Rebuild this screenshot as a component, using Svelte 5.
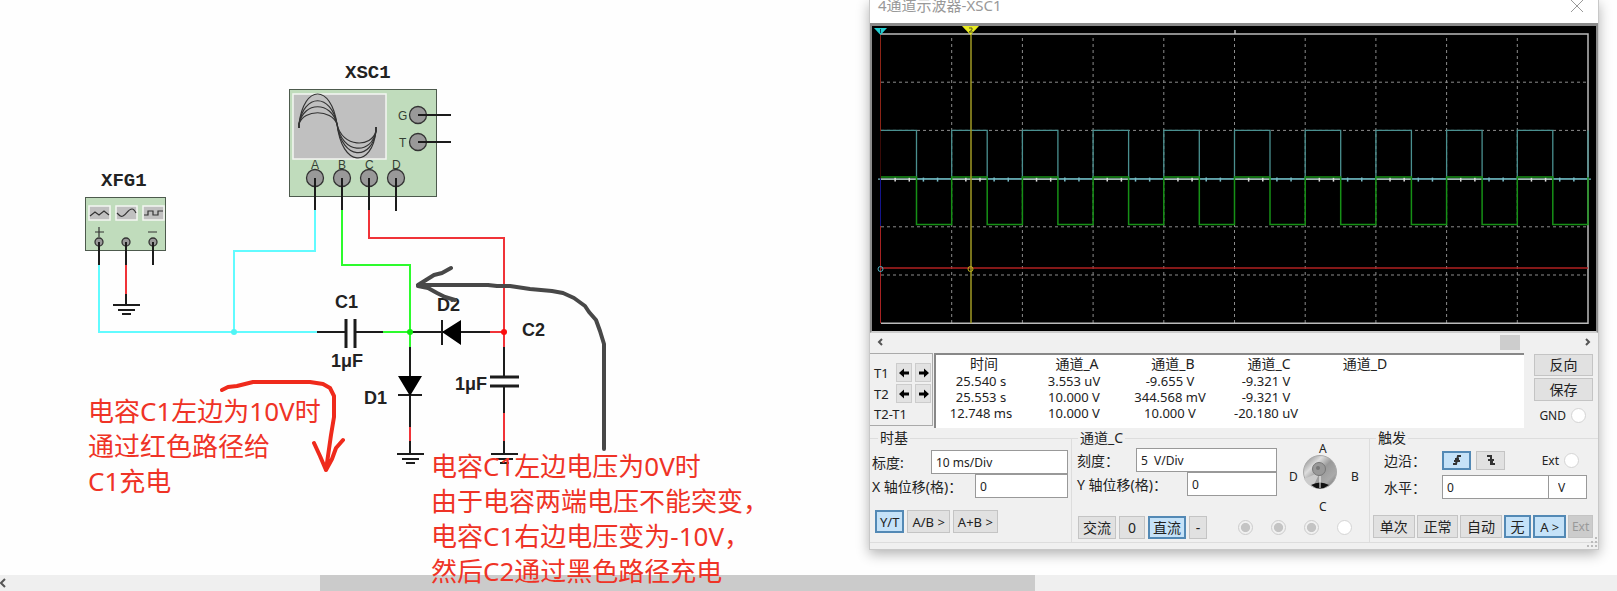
<script lang="ts">
    let timebase = $state("10 ms/Div");
    let xOffset = $state("0");
    let scale = $state("5  V/Div");
    let yOffset = $state("0");
    let level = $state("0");
    let levelUnit = $state("V");

    let displayMode = $state("Y/T");
    let coupling = $state("直流");
    let edge = $state("rising");
    let triggerMode = $state("无");

    const readings = [
        ["25.540 s", "3.553 uV", "-9.655 V", "-9.321 V", ""],
        ["25.553 s", "10.000 V", "344.568 mV", "-9.321 V", ""],
        ["12.748 ms", "10.000 V", "10.000 V", "-20.180 uV", ""],
    ];
    const headers = ["时间", "通道_A", "通道_B", "通道_C", "通道_D"];

    // scope screen geometry
    const left = 9;
    const top = 8;
    const cellW = 70.7;
    const cellH = 48.2;
    const right = left + cellW * 10;
    const bottom = top + cellH * 6;
    const mid = top + cellH * 3;
    const periods = Array.from({ length: 10 }, (_, i) => left + i * cellW);
    const ticks = Array.from({ length: 50 }, (_, i) => i).filter((i) => i % 5);

    function square(high: number, low: number) {
        return periods
            .map((x) => `${x} ${high}H${x + 35.5}V${low}H${x + cellW}V${high}`)
            .map((s, i) => (i ? "L" : "M") + s)
            .join("");
    }

    const channelA = square(top + cellH * 2, mid);
    const channelB = square(mid - 1.5, mid + 46);

    const waves = [
        [84, 168],
        [93, 161],
        [101, 155],
        [109, 148],
    ];
    const inputs = [
        { name: "A", x: 315 },
        { name: "B", x: 342 },
        { name: "C", x: 369 },
        { name: "D", x: 396 },
    ];
    const grounds = [
        { x: 126, y: 305 },
        { x: 410, y: 454 },
        { x: 504, y: 454 },
    ];
</script>

<main class="workspace">
    <div class="canvas">
        <svg class="schematic" width="640" height="480" fill="none">
            <!-- function generator -->
            <text class="instrument" x="101" y="186">XFG1</text>
            <rect class="body" x="85.5" y="197.5" width="80" height="53" />
            <g class="screen">
                <rect x="89" y="206" width="21" height="14" />
                <rect x="116" y="206" width="21" height="14" />
                <rect x="143" y="206" width="21" height="14" />
            </g>
            <path
                class="thin"
                d="M90 216l5-4 4 3 5-4 5 4M117 213c3 3 4 4 6 3 4-2 5-7 9-7 2 0 3 2 4 4M144 215h4v-4h5v4h5v-4h5M95 232h9m-5-5v10M148 232h9"
            />
            {#each [99, 126, 153] as x}
                <circle class="pin" cx={x} cy="242" r="4" />
                <path class="lead" d="M{x} 242v23" />
            {/each}

            <!-- oscilloscope -->
            <text class="instrument" x="345" y="78">XSC1</text>
            <rect class="body" x="289.5" y="89.5" width="147" height="107" />
            <rect class="screen" x="293" y="94" width="93" height="65" />
            {#each waves as [crest, trough]}
                <path
                    class="wave"
                    d="M299 128V124C304 {crest} 331 {crest} 337 124C342 {trough} 372 {trough} 376 131V127"
                />
            {/each}
            <text class="port" x="398" y="120">G</text>
            <text class="port" x="399" y="147">T</text>
            {#each [115, 142] as y}
                <circle class="pin" cx="418" cy={y} r="8.5" />
                <path class="lead" d="M418 {y}h33" />
            {/each}
            {#each inputs as port}
                <text class="port" x={port.x - 4} y="169">{port.name}</text>
                <circle class="pin" cx={port.x} cy="178" r="8.5" />
                <path class="lead" d="M{port.x} 178v33" />
            {/each}

            <!-- wires -->
            <g stroke-width="2">
                <path
                    stroke="#62fbff"
                    d="M99 265V332H317M315 210V251H234V332"
                />
                <path
                    stroke="#2dfb2d"
                    d="M342 210V265H410V347M383 332H410"
                />
                <path
                    stroke="#f03338"
                    d="M369 210V238H504V347M490 332H504M126 265V294M410 427V441M504 413V441"
                />
            </g>
            <circle cx="234" cy="332" r="3" fill="#4ff5f5" />
            <path
                class="lead"
                d="M126 294V305M317 332H346M355 332H383M410 332H490M410 347V427M410 441V454M504 347V377M504 386V413M504 441V454"
            />
            <path
                class="plate"
                d="M346 319V348M355 319V348M490 377H519M490 386H519"
            />
            <path class="lead" d="M442 320V345M398 395H422" />
            <path d="M442 332l19-12v25zM398 376h24l-12 20z" fill="#000" />
            <circle cx="410" cy="332" r="3" fill="#0fe80f" />
            <circle cx="504" cy="332" r="3" fill="#fb0d0d" />
            {#each grounds as g}
                <path
                    class="lead"
                    d="M{g.x - 13} {g.y}h27M{g.x - 8} {g.y + 5}h17M{g.x -
                        4} {g.y + 9}h9"
                />
            {/each}
            <g class="part">
                <text x="335" y="308">C1</text>
                <text x="331" y="367">1μF</text>
                <text x="437" y="311">D2</text>
                <text x="364" y="404">D1</text>
                <text x="455" y="390">1μF</text>
                <text x="522" y="336">C2</text>
            </g>

            <!-- hand-drawn current paths -->
            <path
                class="stroke-dark"
                d="M604 449V344L600 331 596 320 589 312 585 306 574 298 563 293 552 291 530 289 510 286H497L488 285H418M451 268l-9 5-8 2-8 5-8 5M418 286l10 2 9 5 8 4 10 3"
            />
            <path
                class="stroke-red"
                d="M222 390l6-3 9-1 16-4h57l13 2 7 4 4 8v21l-3 18-5 35M314 443l6 13 6 14M343 440l-7 8-4 11-6 11"
            />
        </svg>
    </div>

    <div class="page-scroll">
        <svg class="chevron" width="8" height="12" viewBox="0 0 8 12">
            <path d="M5 2L1 6l4 4" />
        </svg>
        <div class="page-thumb"></div>
    </div>

    <p class="note charge">电容C1左边为10V时<br />通过红色路径给<br />C1充电</p>
    <p class="note transfer">
        电容C1左边电压为0V时<br />由于电容两端电压不能突变，<br
        />电容C1右边电压变为-10V，<br />然后C2通过黑色路径充电
    </p>

    <section class="scope" aria-label="4通道示波器-XSC1">
        <header class="title">
            <span>4通道示波器-XSC1</span>
            <button class="close" aria-label="关闭">
                <svg width="12" height="12" viewBox="0 0 12 12">
                    <path d="M0 0l12 12M12 0L0 12" />
                </svg>
            </button>
        </header>

        <div class="display">
            <svg viewBox="0 0 724 305" fill="none">
                <g class="grid">
                    {#each periods.slice(1) as x}
                        <path d="M{x} {top + 4}V{bottom}" />
                    {/each}
                    {#each [1, 2, 4, 5] as row}
                        <path d="M{left} {top + row * cellH}H{right}" />
                    {/each}
                </g>
                <path
                    stroke="#bbb"
                    stroke-width="1.5"
                    d="M{left} {top}H{right}V{bottom}H{left}M363 4v4"
                />
                <path stroke="#4a9090" stroke-width="1.3" d={channelA} />
                <path
                    stroke="#73b4c0"
                    stroke-width="1.3"
                    d="M{left - 3} {mid + 0.5}H{right + 3}"
                />
                {#each periods as x}
                    <path stroke="#d6dfcb" d="M{x} {mid + 0.5}h35.5" />
                {/each}
                {#each ticks as t}
                    <path
                        stroke={t % 5 < 3 ? "#ddd" : "#78bcc8"}
                        stroke-width="1.5"
                        d="M{left + t * 14.14} {mid - 1}v4"
                    />
                {/each}
                <path stroke="#169016" stroke-width="1.5" d={channelB} />
                <path
                    stroke="#b02020"
                    stroke-width="1.3"
                    d="M{left} 242H{right}"
                />
                <path stroke="#8c2417" d="M{left - 0.5} {top}V105" />
                <path stroke="#3a0b08" d="M{left - 0.5} 105V{mid}" />
                <path stroke="#15158c" d="M{left - 0.5} {mid}V200" />
                <path stroke="#a62222" d="M{left - 0.5} 200V{bottom}" />
                <path
                    stroke="#a19a25"
                    stroke-width="1.5"
                    d="M99 {top}V{bottom}"
                />
                <path fill="#22cdd0" d="M2 2h13l-6.5 7z" />
                <path fill="#e8ea20" d="M90 0h17l-8.5 9z" />
                <path stroke="#145" d="M8.5 3v4" />
                <path stroke="#552" d="M97 2h3v2l-3 2h4" />
                <circle cx="8.5" cy="243" r="2.5" stroke="#4dafc0" />
                <circle cx="98.5" cy="243" r="2.5" stroke="#c0b41b" />
            </svg>
        </div>

        <div class="time-scroll">
            <svg class="chevron" width="8" height="12" viewBox="0 0 8 12">
                <path d="M6 3L3 6l3 3" />
            </svg>
            <div class="time-track"><div class="time-thumb"></div></div>
            <svg class="chevron" width="8" height="12" viewBox="0 0 8 12">
                <path d="M2 3l3 3-3 3" />
            </svg>
        </div>

        <div class="readout">
            <div class="cursors">
                {#each ["T1", "T2"] as cursor}
                    <div class="cursor">
                        <span>{cursor}</span>
                        <button aria-label="{cursor} 左移">
                            <svg width="11" height="10" viewBox="0 0 11 10">
                                <path d="M0 5l5-4.5v3h5v3H5v3z" />
                            </svg>
                        </button>
                        <button aria-label="{cursor} 右移">
                            <svg width="11" height="10" viewBox="0 0 11 10">
                                <path d="M11 5L6 .5v3H1v3h5v3z" />
                            </svg>
                        </button>
                    </div>
                {/each}
                <span class="delta">T2-T1</span>
            </div>

            <div class="values">
                <table>
                    <thead>
                        <tr>
                            {#each headers as header}
                                <th>{header}</th>
                            {/each}
                        </tr>
                    </thead>
                    <tbody>
                        {#each readings as row}
                            <tr>
                                {#each row as value}
                                    <td>{value}</td>
                                {/each}
                            </tr>
                        {/each}
                    </tbody>
                </table>
            </div>

            <div class="actions">
                <button class="btn">反向</button>
                <button class="btn">保存</button>
                <label class="terminal">GND <input type="radio" name="gnd" /></label>
            </div>
        </div>

        <div class="groups">
            <fieldset class="timebase">
                <legend>时基</legend>
                <div class="row">
                    <label for="timebase">标度:</label>
                    <input id="timebase" class="wide" bind:value={timebase} />
                </div>
                <div class="row">
                    <label for="x-offset">X 轴位移(格)：</label>
                    <input id="x-offset" bind:value={xOffset} />
                </div>
                <div class="buttons">
                    {#each ["Y/T", "A/B >", "A+B >"] as mode}
                        <button
                            class="btn latin"
                            class:active={displayMode === mode}
                            onclick={() => (displayMode = mode)}>{mode}</button
                        >
                    {/each}
                </div>
            </fieldset>

            <fieldset class="channel">
                <legend>通道_C</legend>
                <div class="channel-top">
                    <div class="fields">
                        <div class="row">
                            <label for="scale">刻度：</label>
                            <input id="scale" class="wide" bind:value={scale} />
                        </div>
                        <div class="row">
                            <label for="y-offset">Y 轴位移(格)：</label>
                            <input id="y-offset" bind:value={yOffset} />
                        </div>
                    </div>
                    <svg class="dial" width="80" height="64" viewBox="0 0 80 64">
                        <defs>
                            <linearGradient id="knob" x1="0" y1="0" x2="1" y2="1">
                                <stop offset="0" stop-color="#777" />
                                <stop offset=".3" stop-color="#ddd" />
                                <stop offset=".5" stop-color="#999" />
                                <stop offset=".75" stop-color="#aaa" />
                                <stop offset="1" stop-color="#666" />
                            </linearGradient>
                        </defs>
                        <circle cx="36" cy="24" r="16.5" fill="url(#knob)" stroke="#aaa" />
                        <path d="M36 24L20 31a17 17 0 0 0 9 8z" fill="#ccc" />
                        <path d="M27 37q9-5 18 0-9 7-18 0z" fill="#111" />
                        <circle cx="35" cy="21" r="6.5" fill="#999" stroke="#777" />
                        <circle cx="34" cy="20" r="2" fill="#777" />
                        <path d="M36 28v12" stroke="#fff" />
                        <text x="35" y="5">A</text>
                        <text x="67" y="33">B</text>
                        <text x="35" y="63">C</text>
                        <text x="5" y="33">D</text>
                    </svg>
                </div>
                <div class="channel-bottom">
                    <div class="buttons">
                        {#each ["交流", "0", "直流", "-"] as mode}
                            <button
                                class="btn"
                                class:active={coupling === mode}
                                onclick={() => (coupling = mode)}
                                >{mode}</button
                            >
                        {/each}
                    </div>
                    <div class="channel-pins">
                        {#each ["A", "B", "C", "D"] as name}
                            <input
                                type="radio"
                                name="pin"
                                aria-label="通道_{name}"
                                disabled={name !== "D"}
                            />
                        {/each}
                    </div>
                </div>
            </fieldset>

            <fieldset class="trigger">
                <legend>触发</legend>
                <div class="row edge">
                    <span class="caption">边沿：</span>
                    <button
                        class="btn"
                        class:active={edge === "rising"}
                        aria-label="上升沿"
                        onclick={() => (edge = "rising")}
                    >
                        <svg width="12" height="12" viewBox="0 0 12 12">
                            <path d="M2 10h3L7 2h3M3 7h6M4 5h4" />
                        </svg>
                    </button>
                    <button
                        class="btn"
                        class:active={edge === "falling"}
                        aria-label="下降沿"
                        onclick={() => (edge = "falling")}
                    >
                        <svg width="12" height="12" viewBox="0 0 12 12">
                            <path d="M2 2h4v8h4M3 6h6M5 8h3" />
                        </svg>
                    </button>
                    <label class="terminal">Ext <input type="radio" name="ext" /></label>
                </div>
                <div class="row level">
                    <label class="caption" for="level">水平：</label>
                    <input id="level" bind:value={level} />
                    <input class="unit" aria-label="单位" bind:value={levelUnit} />
                </div>
                <div class="buttons">
                    {#each ["单次", "正常", "自动", "无"] as mode}
                        <button
                            class="btn"
                            class:active={triggerMode === mode}
                            onclick={() => (triggerMode = mode)}>{mode}</button
                        >
                    {/each}
                    <button class="btn latin active">A &gt;</button>
                    <button class="btn latin" disabled>Ext</button>
                </div>
            </fieldset>
        </div>
        <svg class="grip" width="12" height="12" viewBox="0 0 12 12">
            <path
                d="M9 1h2M9 5h2M5 5h2M9 9h2M5 9h2M1 9h2"
                stroke="#bbb"
                stroke-width="2"
            />
        </svg>
    </section>
</main>

<style>
    :global(body) {
        margin: 0;
        background: #fefefe;
    }

    .workspace {
        position: relative;
        display: flex;
        flex-direction: column;
        height: 100vh;
        overflow: hidden;
        font-family: "Noto Sans", "Noto Sans CJK SC", sans-serif;
        font-size: 14px;
        color: #222;
    }

    .canvas {
        flex: 1;
        min-height: 0;
    }

    .schematic {
        display: block;
    }

    .instrument {
        font: bold 19px "Liberation Mono", monospace;
        fill: #222;
    }

    .part {
        font: bold 18px "Liberation Sans", sans-serif;
        fill: #222;
    }

    .port {
        font: 12px "Liberation Sans", sans-serif;
        fill: #344034;
    }

    .body {
        fill: #c0dcbc;
        stroke: #4d5a4d;
    }

    .screen {
        fill: #c0c0c0;
        stroke: #f4f6f2;
        stroke-width: 1.5;
    }

    .pin {
        fill: #999;
        stroke: #333;
        stroke-width: 1.3;
    }

    .lead {
        stroke: #1c1c1c;
        stroke-width: 2;
    }

    .plate {
        stroke: #1c1c1c;
        stroke-width: 3;
    }

    .thin,
    .wave {
        stroke: #333;
        stroke-width: 1.2;
    }

    .stroke-dark,
    .stroke-red {
        stroke: #484848;
        stroke-width: 4;
        stroke-linecap: round;
        stroke-linejoin: round;
    }

    .stroke-red {
        stroke: #ef2a1c;
    }

    .chevron {
        flex: none;
        fill: none;
        stroke: #555;
        stroke-width: 2;
    }

    .page-scroll {
        display: flex;
        align-items: center;
        height: 16px;
        background: #efefef;
    }

    .page-thumb {
        width: 44.2%;
        height: 100%;
        margin-left: 312px;
        background: #cbcbcb;
    }

    .note {
        position: absolute;
        margin: 0;
        font-size: 26px;
        line-height: 35px;
        color: #ef3326;
        white-space: nowrap;
    }

    .charge {
        left: 88px;
        top: 394px;
    }

    .transfer {
        left: 431px;
        top: 449px;
    }

    .scope {
        position: absolute;
        top: 0;
        left: 869px;
        right: 18px;
        border: 1px solid #c8c8c8;
        border-top: 0;
        background: #f0f0f0;
        box-shadow: 0 4px 12px rgba(0, 0, 0, 0.3);
    }

    .title {
        display: flex;
        justify-content: space-between;
        padding: 0 15px 13px 8px;
        background: #fff;
        line-height: 10px;
        font-size: 15px;
        color: #999;
    }

    .close {
        height: 10px;
        padding: 0;
        border: 0;
        background: none;
    }

    .close svg {
        display: block;
        stroke: #999;
    }

    .display {
        border: 2px solid #8b8b8b;
        border-top-width: 3px;
        border-bottom-color: #ccc;
        background: #000;
    }

    .display svg {
        display: block;
        width: 100%;
    }

    .grid {
        stroke: #8c8c8c;
        stroke-dasharray: 3 3;
    }

    .time-scroll {
        display: flex;
        align-items: center;
        gap: 4px;
        height: 18px;
        padding: 0 6px;
    }

    .time-track {
        display: flex;
        flex: 1;
        justify-content: flex-end;
        padding-right: 60px;
    }

    .time-thumb {
        width: 20px;
        height: 15px;
        background: #cdcdcd;
    }

    .readout {
        display: flex;
        margin-top: 2px;
        height: 75px;
    }

    .cursors {
        box-sizing: border-box;
        width: 63px;
        height: 73px;
        padding: 8px 0 0 4px;
        border: 1px solid #aaa;
        border-left: 0;
        font-size: 13px;
    }

    .cursor {
        display: flex;
        align-items: center;
        gap: 3px;
        height: 21px;
    }

    .cursor span {
        width: 19px;
    }

    .cursor button {
        display: grid;
        place-items: center;
        width: 16px;
        height: 19px;
        padding: 0;
        border: 1px solid #ccc;
        background: #e2e2e2;
    }

    .delta {
        display: block;
        line-height: 20px;
    }

    .values {
        flex: 1;
        border-top: 2px solid #888;
        border-left: 2px solid #888;
        margin-left: 1px;
        background: #fff;
    }

    table {
        border-collapse: collapse;
        table-layout: fixed;
        width: 474px;
        font-size: 13px;
        text-align: center;
    }

    th {
        width: 96px;
        height: 18px;
        padding: 0 0 0 6px;
        box-sizing: border-box;
        font-size: 14px;
        font-weight: normal;
        line-height: 18px;
    }

    th:first-child {
        width: 90px;
    }

    td {
        height: 16px;
        padding: 0;
        line-height: 16px;
    }

    .actions {
        display: flex;
        flex-direction: column;
        gap: 2px;
        width: 59px;
        padding: 1px 5px 0 10px;
    }

    .btn {
        display: grid;
        place-items: center;
        height: 23px;
        padding: 0 4px;
        border: 1px solid #c4c4c4;
        background: #e1e1e1;
        font: inherit;
        line-height: 18px;
        color: #222;
        white-space: nowrap;
    }

    .latin {
        font-size: 13px;
    }

    .btn.active {
        border: 2px solid #5389b5;
        background: #c5e2f8;
        padding: 0 3px;
    }

    .btn:disabled {
        background: #ccc;
        color: #999;
        padding: 0 1px;
        font-size: 12px;
    }

    .terminal {
        display: flex;
        align-items: center;
        justify-content: flex-end;
        gap: 5px;
        height: 26px;
        padding-right: 7px;
        font-size: 12px;
    }

    input[type="radio"] {
        appearance: none;
        width: 15px;
        height: 15px;
        margin: 0;
        border: 1px solid #d4d4d4;
        border-radius: 50%;
        background: #fff;
    }

    input[type="radio"]:disabled {
        border-color: #ccc;
        background: radial-gradient(#c4c4c4 45%, #f0f0f0 55%);
    }

    .groups {
        display: grid;
        grid-template-columns: 202fr 298fr 228fr;
        padding-bottom: 6px;
    }

    fieldset {
        display: block;
        box-sizing: border-box;
        min-width: 0;
        height: 115px;
        margin: 0;
        padding: 0;
        border: 1px solid #ddd;
        border-left: 0;
    }

    legend {
        margin-left: 6px;
        padding: 0 2px;
        line-height: 20px;
    }

    .row {
        display: flex;
        align-items: center;
        justify-content: space-between;
        height: 24px;
    }

    .row input:not([type="radio"]) {
        box-sizing: border-box;
        width: 93px;
        height: 24px;
        padding: 0 4px;
        border: 1px solid #999;
        background: #fff;
        font: inherit;
        font-size: 12px;
        color: #222;
        white-space: pre;
    }

    .row input.wide:not([type="radio"]) {
        width: 137px;
    }

    .buttons {
        display: flex;
        gap: 3px;
    }

    .timebase {
        padding: 2px 3px 0 2px;
    }

    .timebase .buttons {
        margin: 12px 0 0 3px;
    }

    .channel-top {
        display: flex;
        justify-content: space-between;
        padding-right: 5px;
    }

    .fields {
        width: 200px;
        padding-left: 5px;
    }

    .fields .row input:not([type="radio"]) {
        width: 90px;
    }

    .fields .row input.wide:not([type="radio"]) {
        width: 141px;
    }

    .dial {
        overflow: visible;
        font-size: 12px;
        fill: #222;
    }

    .channel-bottom {
        display: flex;
        align-items: center;
        justify-content: space-between;
        margin-top: 4px;
        padding: 0 17px 0 6px;
    }

    .channel-bottom .btn {
        min-width: 18px;
    }

    .channel-bottom .btn:nth-child(2) {
        width: 26px;
    }

    .channel-pins {
        display: flex;
        gap: 18px;
    }

    .trigger {
        border-right: 0;
    }

    .caption {
        width: 58px;
    }

    .trigger .row {
        justify-content: flex-start;
        padding-left: 14px;
    }

    .edge .btn {
        width: 29px;
        height: 19px;
        margin-right: 5px;
        padding: 0;
    }

    .edge .btn svg {
        fill: none;
        stroke: #333;
        stroke-width: 2;
    }

    .edge .terminal {
        margin-left: auto;
        padding-right: 19px;
    }

    .level {
        margin-top: 3px;
    }

    .level input:not([type="radio"]) {
        width: 107px;
    }

    .level input.unit:not([type="radio"]) {
        width: 39px;
        margin-left: -1px;
        padding-left: 9px;
    }

    .trigger .buttons {
        gap: 2px;
        margin: 16px 5px 0 3px;
    }

    .trigger .buttons .btn {
        flex: 1 1 auto;
    }

    .grip {
        position: absolute;
        right: 0;
        bottom: 0;
    }
</style>
